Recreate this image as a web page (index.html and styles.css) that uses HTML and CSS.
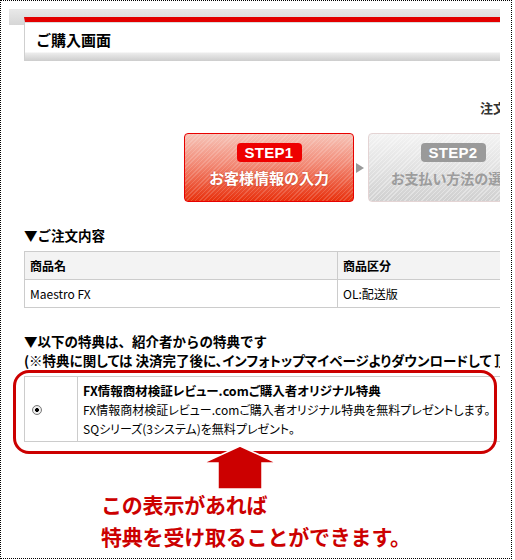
FILE: index.html
```html
<!DOCTYPE html>
<html lang="ja">
<head>
<meta charset="utf-8">
<title>ご購入画面</title>
<link rel="stylesheet" href="styles.css">
</head>
<body>
<div class="frame">
  <div class="viewport">
    <div class="hdr">
      <div class="hdr-box"><h1 class="hdr-title">ご購入画面</h1></div>
    </div>
    <p class="order-note">注文手続き</p>
    <div class="steps">
      <div class="step step-active">
        <span class="badge">STEP1</span>
        <span class="step-label">お客様情報の入力</span>
      </div>
      <span class="step-arrow"></span>
      <div class="step step-next">
        <span class="badge">STEP2</span>
        <span class="step-label">お支払い方法の選択</span>
      </div>
    </div>
    <h2 class="sec-title">▼ご注文内容</h2>
    <table class="order">
      <tr><th class="c-name">商品名</th><th>商品区分</th></tr>
      <tr><td class="c-name">Maestro FX</td><td>OL:配送版</td></tr>
    </table>
    <h2 class="sec-title sec-bonus">▼以下の特典は、紹介者からの特典です<br><span class="prop">(※特典に関しては 決済完了後に、インフォトップマイページよりダウンロードして 頂けます)</span></h2>
    <table class="bonus">
      <tr>
        <td class="c-radio"><span class="radio"></span></td>
        <td class="c-desc">
          <strong>FX情報商材検証レビュー.comご購入者オリジナル特典</strong><br>
          FX情報商材検証レビュー.comご購入者オリジナル特典を無料プレゼントします。<br>
          SQシリーズ(3システム)を無料プレゼント。
        </td>
      </tr>
    </table>
    <p class="note">この表示があれば<br>特典を受け取ることができます。</p>
  </div>
  <div class="highlight"></div>
  <svg class="up-arrow" width="80" height="48" viewBox="0 0 80 48">
    <polygon points="40,3 77,20 62,20 62,46 18,46 18,20 3,20" fill="#cc0000" stroke="#ffffff" stroke-width="1.5"/>
  </svg>
</div>
</body>
</html>
```

FILE: styles.css
```css
html, body {
  margin: 0;
  padding: 0;
  background: #fff;
}
body {
  font-family: "Noto Sans CJK JP", "Liberation Sans", sans-serif;
  color: #000;
}
.frame {
  position: relative;
  width: 510px;
  height: 557px;
  border: 1px dotted #000;
  background: #fff;
  overflow: hidden;
}
.viewport {
  margin: 8px 0 0 8px;
  width: 491px;
  overflow: hidden;
}
.hdr {
  background: linear-gradient(#e9e9e9, #d6d6d6) no-repeat top left / 100% 16px;
  padding: 8px 0 0 15px;
}
.hdr-box {
  border-top: 5px solid #e30000;
  border-left: 1px solid #cfcfcf;
  height: 44px;
  box-sizing: border-box;
  box-shadow: inset 0 1px 0 #dcdcdc;
  background: linear-gradient(to bottom, #fff 0, #fff 30px, #ececec 31px, #cdcdcd 39px);
  padding: 8px 0 0 11px;
}
.hdr-title {
  margin: 0;
  font-size: 15px;
  line-height: 20px;
  font-weight: bold;
}
.order-note {
  margin: 38px 0 0;
  padding-left: 471px;
  font-size: 13px;
  line-height: 18px;
  font-weight: bold;
  color: #333;
  white-space: nowrap;
}
.steps {
  margin-top: 16px;
  padding-left: 175px;
  display: flex;
  align-items: center;
}
.step {
  flex: 0 0 auto;
  width: 170px;
  height: 69px;
  box-sizing: border-box;
  border-radius: 4px;
  display: flex;
  flex-direction: column;
  align-items: center;
  padding-top: 9px;
}
.step-active {
  border: 1px solid #e80000;
  background:
    repeating-linear-gradient(135deg, rgba(255,255,255,0.16) 0 1px, rgba(255,255,255,0) 1px 3px),
    linear-gradient(to bottom, #f6c4b8 0%, #f28a76 45%, #e8300c 100%);
}
.step-next {
  border: 1px solid #e4d4d4;
  background:
    repeating-linear-gradient(135deg, rgba(255,255,255,0.35) 0 1px, rgba(255,255,255,0) 1px 3px),
    linear-gradient(to bottom, #f3f3f3 0%, #e2e2e2 50%, #d0d0d0 100%);
}
.badge {
  width: 65px;
  height: 19px;
  border-radius: 4px;
  font-family: "Liberation Sans", Arial, sans-serif;
  font-weight: bold;
  font-size: 15px;
  line-height: 19px;
  text-align: center;
  color: #fff;
  letter-spacing: 0.3px;
}
.step-active .badge { background: #ee0000; }
.step-next .badge { background: #9a9a9a; }
.step-label {
  margin-top: 5px;
  font-size: 15px;
  line-height: 22px;
  font-weight: bold;
  white-space: nowrap;
}
.step-active .step-label {
  color: #fff;
  text-shadow: 0 0 2px rgba(160,30,0,0.6);
}
.step-next .step-label {
  color: #9c9c9c;
  align-self: flex-start;
  padding-left: 22px;
  font-size: 14px;
  font-feature-settings: "palt";
}
.step-arrow {
  flex: 0 0 auto;
  width: 0;
  height: 0;
  margin: 0 4px 0 2px;
  border-left: 8px solid #999;
  border-top: 5px solid transparent;
  border-bottom: 5px solid transparent;
}
.sec-title {
  margin: 24px 0 0;
  padding-left: 15px;
  font-size: 13.5px;
  line-height: 18px;
  font-weight: bold;
  white-space: nowrap;
}
.sec-bonus {
  margin-top: 24px;
  line-height: 19px;
}
.prop {
  font-feature-settings: "palt";
}
table {
  border-collapse: collapse;
  margin-left: 15px;
  width: 560px;
  font-size: 12px;
}
.order {
  margin-top: 7px;
}
.order th, .order td {
  border: 1px solid #cccccc;
  text-align: left;
  padding: 0 5px;
  height: 27px;
  white-space: nowrap;
}
.order th {
  background: #f3f3f3;
  font-weight: bold;
}
.order .c-name { width: 302px; }
.bonus {
  margin-top: 6px;
}
.bonus td {
  border: 1px solid #cccccc;
  vertical-align: middle;
  line-height: 19px;
  padding: 4px 5px 3px;
  white-space: nowrap;
}
.bonus .c-radio {
  width: 40px;
  padding-left: 7px;
}
.bonus .c-desc {
  font-feature-settings: "palt";
}
.bonus strong {
  font-size: 12.5px;
}
.radio {
  display: block;
  width: 10px;
  height: 10px;
  box-sizing: border-box;
  border-radius: 50%;
  border: 1px solid #7a7a7a;
  background: radial-gradient(circle, #000 0 1.8px, #f4f4f4 2.2px, #dcdcdc 100%);
}
.note {
  margin: 46px 0 0;
  padding-left: 92px;
  font-size: 21px;
  line-height: 32px;
  font-weight: bold;
  letter-spacing: -0.2px;
  color: #cc0000;
  white-space: nowrap;
}
.highlight {
  position: absolute;
  left: 12px;
  top: 369px;
  width: 484px;
  height: 84px;
  box-sizing: border-box;
  border: 3px solid #cc0000;
  border-radius: 16px;
}
.up-arrow {
  position: absolute;
  left: 199px;
  top: 442px;
}
```
